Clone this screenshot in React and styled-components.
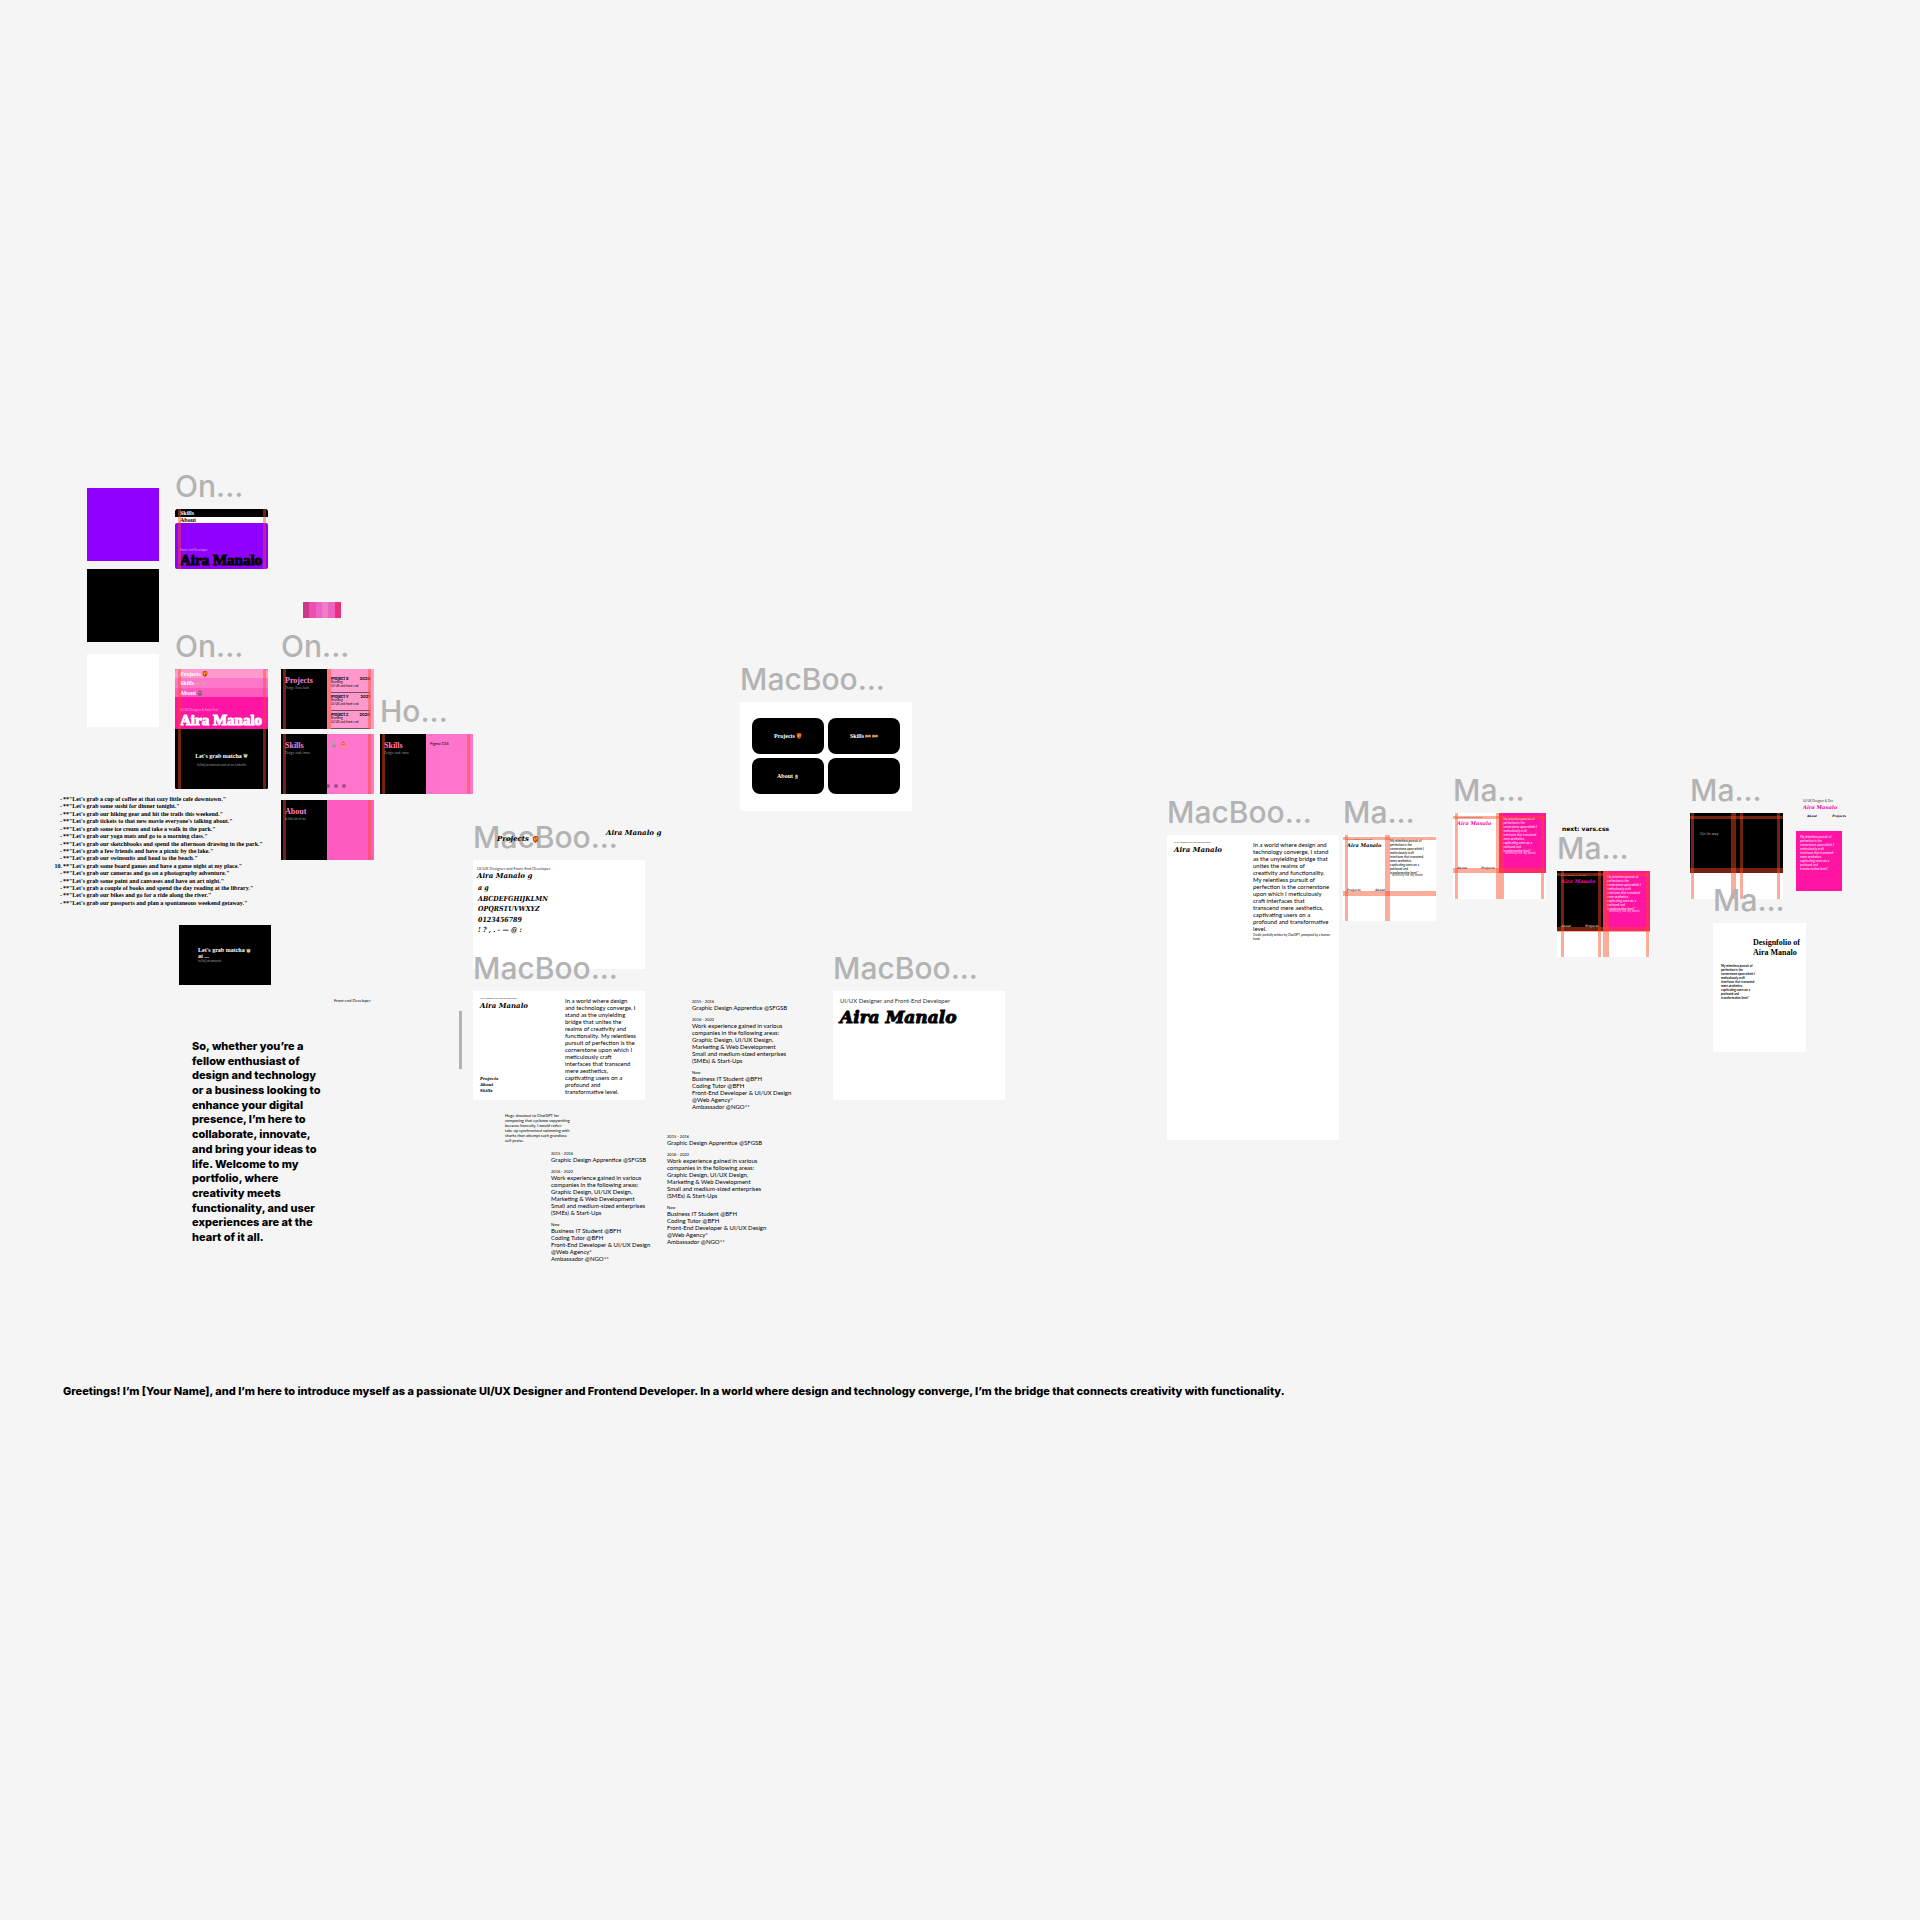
import React from "react";
import styled, { createGlobalStyle, css } from "styled-components";

const GlobalStyle = createGlobalStyle`
  *, *::before, *::after { box-sizing: border-box; }
  body { margin: 0; background: #f5f5f5; }
  h2, p, ul, ol, figure { margin: 0; padding: 0; }
  ul, ol { list-style: none; }
  a { color: inherit; text-decoration: none; }
`;

const SERIF = '"Liberation Serif", serif';
const SLAB = '"DejaVu Serif", serif';
const SLAB_NARROW = '"DejaVu Serif Condensed", "DejaVu Serif", serif';
const SANS = 'Inter, sans-serif';
const BODY = 'Lato, sans-serif';

/* ---------- canvas ---------- */

const Canvas = styled.main`
  position: relative;
  min-height: 100vh;
  overflow: hidden;
  background: #f5f5f5;
  color: #000;
  font-family: ${SANS};
`;

const Node = styled.div`
  position: absolute;
  left: ${(p) => p.$x}px;
  top: ${(p) => p.$y}px;
  ${(p) => p.$w && css`width: ${p.$w}px;`}
`;

const FrameRoot = styled.figure`
  position: absolute;
  left: ${(p) => p.$x}px;
  top: ${(p) => p.$y}px;
`;

const FrameLabel = styled.figcaption`
  height: 41px;
  font: 500 30px/36px ${SANS};
  color: #b3b3b3;
  white-space: nowrap;
`;

function Frame({ x, y, label, children }) {
  return (
    <FrameRoot $x={x} $y={label ? y - 41 : y}>
      {label && <FrameLabel>{label}</FrameLabel>}
      {children}
    </FrameRoot>
  );
}

const Board = styled.div`
  position: relative;
  display: flex;
  flex-direction: column;
  width: ${(p) => p.$w}px;
  height: ${(p) => p.$h}px;
  background: ${(p) => p.$bg || "#fff"};
  border-radius: ${(p) => p.$r || 0}px;
  overflow: hidden;
`;

const Guide = styled.i`
  position: absolute;
  background: rgba(250, 74, 34, 0.46);
  ${(p) =>
    p.$row
      ? css`left: 0; right: 0; top: ${p.$at}px; height: ${p.$size || 3}px;`
      : css`top: 0; bottom: 0; left: ${p.$at}px; width: ${p.$size || 3}px;`}
`;

const Swatch = styled.div`
  height: 73px;
  background: ${(p) => p.$color};
`;

const Strip = styled.div`
  display: flex;
  height: 16px;
`;

const StripCell = styled.span`
  flex: 1;
  background: ${(p) => p.$color};
`;

const ScrollMark = styled.div`
  height: 58px;
  background: #b3b3b3;
`;

/* ---------- type ---------- */

const Title = styled.h2`
  font: 700 ${(p) => p.$size}px/${(p) => p.$lh || p.$size + 2}px ${SERIF};
  color: ${(p) => p.$color || "#000"};
  white-space: nowrap;
  display: flex;
  align-items: center;
  gap: 1px;
  ${(p) => p.$fat && css`-webkit-text-stroke: 1px currentColor;`}
`;

const Name = styled.h2`
  font: italic 700 ${(p) => p.$size}px/${(p) => p.$size + 3}px ${(p) => (p.$narrow ? SLAB_NARROW : SLAB)};
  color: ${(p) => p.$color || "#000"};
  white-space: nowrap;
  display: flex;
  align-items: center;
  gap: 3px;
  ${(p) => p.$fat && css`-webkit-text-stroke: 1px currentColor;`}
`;

const Small = styled.p`
  font: 400 ${(p) => p.$size || 3}px/${(p) => (p.$size || 3) + 1}px ${BODY};
  color: ${(p) => p.$color || "#333"};
  white-space: nowrap;
`;

const CopyRoot = styled.p`
  display: flex;
  flex-direction: column;
  justify-content: space-between;
  height: ${(p) => p.$h}px;
  font: ${(p) => p.$weight || 400} ${(p) => p.$size}px/${(p) => p.$size + 1}px ${(p) => p.$font || BODY};
  color: ${(p) => p.$color || "#000"};
  white-space: nowrap;
`;

function Copy({ lines, h, size, weight, color, font }) {
  return (
    <CopyRoot $h={h} $size={size} $weight={weight} $color={color} $font={font}>
      {lines.map((line) => (
        <span key={line}>{line}</span>
      ))}
    </CopyRoot>
  );
}

/* ---------- drawings ---------- */

const Glyph = styled.svg`
  flex: none;
  width: ${(p) => p.$s || 6}px;
  height: ${(p) => p.$s || 6}px;
`;

const Mitt = ({ s }) => (
  <Glyph $s={s} viewBox="0 0 12 12" aria-hidden="true">
    <path d="M1 2 4 0h5l2 3-1 6-4 3-4-3z" fill="#d8431b" />
    <path d="M3 3h3v5H4zM7 2h2v4H7z" fill="#f5a623" />
  </Glyph>
);
const Cup = ({ s }) => (
  <Glyph $s={s} viewBox="0 0 12 12" aria-hidden="true">
    <path d="M1 3h10l-1 6-3 3H5L2 9z" fill="#d9cdb8" />
    <ellipse cx="6" cy="4" rx="4" ry="2" fill="#7fae5a" />
    <path d="M3 10h6l-1 2H4z" fill="#8d5a3a" />
  </Glyph>
);
const Hands = ({ s, color = "#d99a5b" }) => (
  <Glyph $s={s} viewBox="0 0 12 12" aria-hidden="true">
    <path d="M0 5 3 3l3 2 3-2 3 2-1 4-3-1-2 1-2-1-3 2z" fill={color} />
  </Glyph>
);
const Person = ({ s, hair = "#444", body = "#777" }) => (
  <Glyph $s={s} viewBox="0 0 12 12" aria-hidden="true">
    <path d="M3 5a3 4 0 0 1 6 0v4H3z" fill={hair} />
    <circle cx="6" cy="5" r="2" fill="#d9b08c" />
    <path d="M2 12c0-5 8-5 8 0z" fill={body} />
  </Glyph>
);

/* ---------- landing screens ---------- */

const Band = styled.div`
  display: flex;
  align-items: center;
  height: ${(p) => p.$h}px;
  padding-left: 5px;
  background: ${(p) => p.$bg};
  border-radius: ${(p) => p.$r || 0}px ${(p) => p.$r || 0}px 0 0;
`;

const Hero = styled.div`
  display: flex;
  flex-direction: column;
  justify-content: flex-end;
  height: ${(p) => p.$h}px;
  padding-left: 5px;
  background: ${(p) => p.$bg};
  border-radius: ${(p) => p.$r || 0}px ${(p) => p.$r || 0}px 0 0;
`;

const Invite = styled.div`
  display: flex;
  flex-direction: column;
  align-items: ${(p) => (p.$left ? "flex-start" : "center")};
  justify-content: center;
  gap: ${(p) => (p.$left ? 0 : 3)}px;
  height: 60px;
  padding-left: ${(p) => (p.$left ? 19 : 0)}px;
  background: #000;
`;

const Split = styled.div`
  display: grid;
  grid-template-columns: 46px 1fr;
  height: 60px;
`;

const Pane = styled.section`
  position: relative;
  display: flex;
  flex-direction: column;
  gap: ${(p) => p.$gap || 0}px;
  padding: ${(p) => p.$pad || "0"};
  background: ${(p) => p.$bg};
`;

const ProjectRow = styled.li`
  display: grid;
  grid-template-columns: 1fr auto;
  height: 17px;
  margin-bottom: 1px;
  border-bottom: 1px solid #7d4a64;
  padding-bottom: 4px;
  font: 700 4px/5px ${SANS};
`;

const RowNote = styled.span`
  grid-column: 1 / -1;
  font: 400 3px/3px ${BODY};
`;

const Dots = styled.div`
  position: absolute;
  left: -1px;
  bottom: 6px;
  display: flex;
  gap: 4px;
`;

const Dot = styled.span`
  width: 4px;
  height: 4px;
  border-radius: 50%;
  background: rgba(80, 40, 70, 0.5);
`;

const IconRow = styled.div`
  display: flex;
  gap: 3px;
`;

function SectionScreen({ x, y, label, title, note, bg, children, mid }) {
  return (
    <Frame x={x} y={y} label={label}>
      <Board $w={93} $h={60}>
        <Split>
          <Pane $bg="#000" $pad="8px 0 0 4px" $gap={1}>
            <Title $size={8} $lh={8} $color="#ff7fcf">{title}</Title>
            <Small $color="#999">{note}</Small>
          </Pane>
          <Pane $bg={bg} $pad="7px 4px 0">
            {children}
          </Pane>
        </Split>
        <Guide $at={2} />
        {mid && <Guide $at={46} $size={4} />}
        <Guide $at={87} />
      </Board>
    </Frame>
  );
}

const DotRow = () => (
  <Dots>
    <Dot />
    <Dot />
    <Dot />
  </Dots>
);

/* ---------- card board ---------- */

const CardGrid = styled.div`
  display: grid;
  grid-template-columns: 1fr 1fr;
  grid-auto-rows: 36px;
  gap: 4px;
  padding: 16px 12px;
`;

const Card = styled.div`
  display: flex;
  align-items: center;
  justify-content: center;
  border-radius: 8px;
  background: #000;
`;

/* ---------- portfolio boards ---------- */

const Columns = styled.div`
  flex: 1;
  display: grid;
  grid-template-columns: ${(p) => p.$left}px 1fr;
  padding: 6px 7px;
`;

const Side = styled.div`
  display: flex;
  flex-direction: column;
  justify-content: space-between;
`;

const Nav = styled.nav`
  display: flex;
  flex-direction: ${(p) => (p.$row ? "row" : "column")};
  justify-content: space-between;
  font: italic 700 ${(p) => (p.$row ? 3 : 4)}px/${(p) => (p.$row ? 4 : 6)}px ${SLAB};
  color: ${(p) => p.$color || "#000"};
`;

const PushDown = styled.div`
  margin-top: auto;
`;

const MiniHead = styled.div`
  display: flex;
  flex-direction: column;
  gap: ${(p) => p.$gap || 0}px;
`;

const Specimen = styled.div`
  display: flex;
  flex-direction: column;
  padding: 6px 0 0 4px;
`;

const SpecimenRows = styled.div`
  display: flex;
  flex-direction: column;
  justify-content: space-between;
  height: 54px;
  padding: 2px 0 0 1px;
`;

const ROLE = "UI/UX Designer and Front-End Developer";

const PITCH_NARROW = [
  "In a world where design", "and technology converge, I", "stand as the unyielding",
  "bridge that unites the", "realms of creativity and", "functionality. My relentless",
  "pursuit of perfection is the", "cornerstone upon which I", "meticulously craft",
  "interfaces that transcend", "mere aesthetics,", "captivating users on a",
  "profound and", "transformative level.",
];

const PITCH_WIDE = [
  "In a world where design and", "technology converge, I stand", "as the unyielding bridge that",
  "unites the realms of", "creativity and functionality.", "My relentless pursuit of",
  "perfection is the cornerstone", "upon which I meticulously", "craft interfaces that",
  "transcend mere aesthetics,", "captivating users on a", "profound and transformative", "level.",
];

const PITCH_MINI = [
  "My relentless pursuit of", "perfection is the", "cornerstone upon which I",
  "meticulously craft", "interfaces that transcend", "mere aesthetics,",
  "captivating users on a", "profound and", "transformative level.*",
];

const CLOSING = [
  "So, whether you’re a", "fellow enthusiast of", "design and technology",
  "or a business looking to", "enhance your digital", "presence, I’m here to",
  "collaborate, innovate,", "and bring your ideas to", "life. Welcome to my",
  "portfolio, where", "creativity meets", "functionality, and user",
  "experiences are at the", "heart of it all.",
];

const THANKS = [
  "Huge shoutout to ChatGPT for", "composing that eyebrow copywriting",
  "because honestly, I would rather", "take up synchronized swimming with",
  "sharks than attempt such grandiose", "self-praise.",
];

const IDEAS = [
  "a cup of coffee at that cozy little cafe downtown.",
  "some sushi for dinner tonight.",
  "our hiking gear and hit the trails this weekend.",
  "tickets to that new movie everyone's talking about.",
  "some ice cream and take a walk in the park.",
  "our yoga mats and go to a morning class.",
  "our sketchbooks and spend the afternoon drawing in the park.",
  "a few friends and have a picnic by the lake.",
  "our swimsuits and head to the beach.",
  "some board games and have a game night at my place.",
  "our cameras and go on a photography adventure.",
  "some paint and canvases and have an art night.",
  "a couple of books and spend the day reading at the library.",
  "our bikes and go for a ride along the river.",
  "our passports and plan a spontaneous weekend getaway.",
];

const IdeaList = styled.ol`
  display: flex;
  flex-direction: column;
  justify-content: space-between;
  height: 111px;
  font: 700 6px/7px ${SERIF};
  white-space: nowrap;
`;

const Idea = styled.li`
  display: grid;
  grid-template-columns: 6px auto;
  column-gap: 1px;
`;

const IdeaMark = styled.span`
  display: flex;
  justify-content: flex-end;
`;

function IntroBoard({ x, y, h, left, lines, copyH, nav, foot }) {
  return (
    <Frame x={x} y={y} label="MacBoo...">
      <Board $w={172} $h={h}>
        <Columns $left={left}>
          <Side>
            <MiniHead $gap={1}>
              <Small $size={2}>{ROLE}</Small>
              <Name $size={7}>Aira Manalo</Name>
            </MiniHead>
            {nav && (
              <Nav aria-label="Sections">
                <a href="#projects">Projects</a>
                <a href="#about">About</a>
                <a href="#skills">Skills</a>
              </Nav>
            )}
          </Side>
          <MiniHead $gap={2}>
            <Copy lines={lines} h={copyH} size={6} />
            {foot && <Copy lines={foot} h={8} size={3} />}
          </MiniHead>
        </Columns>
      </Board>
    </Frame>
  );
}

function MiniBoard({ x, y, leftBg, rightBg, nameColor, ink, copyColor, guides, projects, inset = 4 }) {
  return (
    <Frame x={x} y={y} label="Ma...">
      <Board $w={93} $h={86}>
        <Split>
          <Pane $bg={leftBg} $pad="3px 4px 3px 4px">
            <MiniHead>
              <Small $size={2} $color={ink}>UI/UX Designer & Front-End</Small>
              <Name $size={5} $color={nameColor}>Aira Manalo</Name>
            </MiniHead>
            <PushDown>
              <Nav $row $color={ink} aria-label="Sections">
                <a href="#first">{projects ? "Projects" : "About"}</a>
                <a href="#second">{projects ? "About" : "Projects"}</a>
              </Nav>
            </PushDown>
          </Pane>
          <Pane $bg={rightBg} $pad={`4px 0 0 ${inset}px`} $gap={1}>
            <Copy lines={PITCH_MINI} h={33} size={3} weight={700} color={copyColor} />
            <Small $color={copyColor}>* definitely not my words</Small>
          </Pane>
        </Split>
        {guides.map(([at, size, row]) => (
          <Guide key={`${at}-${row ? "r" : "c"}`} $at={at} $size={size} $row={row} />
        ))}
      </Board>
    </Frame>
  );
}

/* ---------- work history ---------- */

const History = styled.div`
  display: flex;
  flex-direction: column;
  gap: 6px;
`;

const JOBS = [
  { years: "2015 - 2016", h: 7, lines: ["Graphic Design Apprentice @SFGSB"] },
  {
    years: "2016 - 2022",
    h: 42,
    lines: [
      "Work experience gained in various", "companies in the following areas:",
      "Graphic Design, UI/UX Design,", "Marketing & Web Development",
      "Small and medium-sized enterprises", "(SMEs) & Start-Ups",
    ],
  },
  {
    years: "Now",
    h: 35,
    lines: [
      "Business IT Student @BFH", "Coding Tutor @BFH",
      "Front-End Developer & UI/UX Design", "@Web Agency*", "Ambassador @NGO**",
    ],
  },
];

function WorkHistory({ x, y }) {
  return (
    <Node $x={x} $y={y}>
      <History>
        {JOBS.map((job) => (
          <div key={job.years}>
            <Small $size={4} $color="#000">{job.years}</Small>
            <Copy lines={job.lines} h={job.h} size={6} />
          </div>
        ))}
      </History>
    </Node>
  );
}

const Greeting = styled.p`
  font: 800 11px/14px ${SANS};
  white-space: nowrap;
`;

const FileNote = styled.p`
  font: 700 6px/8px "DejaVu Sans", sans-serif;
  white-space: nowrap;
`;

const ComingSoon = styled.div`
  height: 60px;
  padding: 18px 0 0 10px;
  background: #000;
`;

const Cover = styled.div`
  display: flex;
  flex-direction: column;
  gap: 6px;
  padding: 15px 3px 0 8px;
`;

const CoverTitle = styled.div`
  padding-left: 32px;
`;

const PinkCard = styled.div`
  height: 60px;
  padding: 4px;
  background: #ff14a4;
`;

export default function App() {
  return (
    <>
      <GlobalStyle />
      <Canvas>
        <Node $x={87} $y={488} $w={72}><Swatch $color="#9000ff" /></Node>
        <Node $x={87} $y={569} $w={72}><Swatch $color="#000" /></Node>
        <Node $x={87} $y={654} $w={72}><Swatch $color="#fff" /></Node>

        <Frame x={175} y={509} label="On...">
          <Board $w={93} $h={60} $r={2} $bg="#f5f5f5">
            <Band $h={8} $bg="#000" $r={2}><Title $size={6} $color="#fff">Skills</Title></Band>
            <Band $h={6} $bg="#fff" $r={2}><Title $size={6}>About</Title></Band>
            <Hero $h={46} $bg="#9000ff" $r={2}>
              <Small $color="#d9a8ff">Front-end Developer</Small>
              <Title $size={15} $fat>Aira Manalo</Title>
            </Hero>
            <Guide $at={3} />
            <Guide $at={88} />
          </Board>
        </Frame>

        <Node $x={303} $y={602} $w={38}>
          <Strip>
            {["#c8388f", "#ea50a8", "#ec63cc", "#ee7ec9", "#ee63bd", "#ea2f7c"].map((c) => (
              <StripCell key={c} $color={c} />
            ))}
          </Strip>
        </Node>

        <Frame x={175} y={669} label="On...">
          <Board $w={93} $h={120} $bg="#000" $r={2}>
            <Band $h={9} $bg="#ff9acd"><Title $size={6} $color="#fff">Projects<Mitt /></Title></Band>
            <Band $h={10} $bg="#ff77ca">
              <Title $size={6} $color="#fff">Skills<Hands s={5} color="#d9a58c" /><Hands s={5} color="#d9a58c" /></Title>
            </Band>
            <Band $h={9} $bg="#ff5cbe"><Title $size={6} $color="#fff">About<Person /></Title></Band>
            <Hero $h={32} $bg="#ff14a4">
              <Small $color="#ffb0dd">UI/UX Designer & Front-End</Small>
              <Title $size={15} $color="#fff" $fat>Aira Manalo</Title>
            </Hero>
            <Invite>
              <Title $size={6} $color="#fff">Let's grab matcha<Cup s={5} /></Title>
              <Small $color="#999">hello@airamanalo.com or on LinkedIn</Small>
            </Invite>
            <Guide $at={3} />
            <Guide $at={88} />
          </Board>
        </Frame>

        <SectionScreen x={281} y={669} label="On..." title="Projects" note="Things I have built" bg="#ff99cc" mid>
          <ul>
            {[["Project X", "2023"], ["Project Y", "2021"], ["Project Z", "2020"]].map(([name, year]) => (
              <ProjectRow key={name}>
                <span>{name}</span>
                <span>{year}</span>
                <RowNote>Branding</RowNote>
                <RowNote>UI/UX and front-end</RowNote>
              </ProjectRow>
            ))}
          </ul>
        </SectionScreen>
        <SectionScreen x={281} y={734} title="Skills" note="Design, code, more" bg="#ff75cc">
          <IconRow>
            <Person s={6} hair="#8aa08a" body="#8f8f8f" />
            <Person s={6} hair="#e0491c" body="#f0b030" />
          </IconRow>
          <DotRow />
        </SectionScreen>
        <SectionScreen x={281} y={800} title="About" note="A little bit of me" bg="#ff5cc3" />
        <SectionScreen x={380} y={734} label="Ho..." title="Skills" note="Design, code, more" bg="#ff75cc">
          <Small $size={4} $color="#000">Figma CSS</Small>
        </SectionScreen>

        <Node $x={56} $y={796}>
          <IdeaList>
            {IDEAS.map((idea, i) => (
              <Idea key={idea}>
                <IdeaMark>{i === 9 ? "10." : "-"}</IdeaMark>
                <span>**"Let's grab {idea}"</span>
              </Idea>
            ))}
          </IdeaList>
        </Node>

        <Node $x={179} $y={925} $w={92}>
          <Invite $left>
            <Title $size={6} $lh={6} $color="#fff">Let's grab matcha<Cup s={5} /></Title>
            <Title $size={6} $lh={6} $color="#fff">at ...</Title>
            <Small $color="#999">hello@airamanalo</Small>
          </Invite>
        </Node>

        <Node $x={334} $y={998}><Small $size={4} $color="#000">Front-end Developer</Small></Node>
        <Node $x={459} $y={1011} $w={3}><ScrollMark /></Node>
        <Node $x={192} $y={1040}><Copy lines={CLOSING} h={203} size={11} weight={800} font={SANS} /></Node>

        <Frame x={473} y={860} label="MacBoo...">
          <Board $w={172} $h={109}>
            <Specimen>
              <Small $size={4}>{ROLE}</Small>
              <Name $size={7}>Aira Manalo g</Name>
              <SpecimenRows>
                {["a g", "ABCDEFGHIJKLMN", "OPQRSTUVWXYZ", "0123456789", "! ? , . - — @ :"].map((row) => (
                  <Name key={row} $size={7} $narrow>{row}</Name>
                ))}
              </SpecimenRows>
            </Specimen>
          </Board>
        </Frame>
        <Node $x={497} $y={834}><Name $size={7}>Projects<Mitt s={7} /></Name></Node>
        <Node $x={606} $y={828}><Name $size={7}>Aira Manalo g</Name></Node>

        <Frame x={740} y={702} label="MacBoo...">
          <Board $w={172} $h={109}>
            <CardGrid>
              <Card><Title $size={6} $color="#fff">Projects<Mitt /></Title></Card>
              <Card><Title $size={6} $color="#fff">Skills<Hands /><Hands /></Title></Card>
              <Card><Title $size={6} $color="#fff">About<Person s={5} hair="#d9c08c" body="#5b7fb0" /></Title></Card>
              <Card />
            </CardGrid>
          </Board>
        </Frame>

        <IntroBoard x={473} y={991} h={109} left={85} lines={PITCH_NARROW} copyH={97} nav />

        <Node $x={505} $y={1113}><Copy lines={THANKS} h={29} size={4} /></Node>

        <WorkHistory x={692} y={999} />
        <WorkHistory x={551} y={1151} />
        <WorkHistory x={667} y={1134} />

        <Frame x={833} y={991} label="MacBoo...">
          <Board $w={172} $h={109}>
            <Columns $left={158}>
              <MiniHead $gap={3}>
                <Small $size={6}>{ROLE}</Small>
                <Name $size={17} $fat>Aira Manalo</Name>
              </MiniHead>
            </Columns>
          </Board>
        </Frame>

        <IntroBoard
          x={1167}
          y={835}
          h={305}
          left={79}
          lines={PITCH_WIDE}
          copyH={90}
          foot={["Credit: partially written by ChatGPT, prompted by a human", "hand."]}
        />

        <MiniBoard
          x={1343} y={835} leftBg="#fff" rightBg="#fff" ink="#333" copyColor="#333" projects inset={1}
          guides={[[2, 3], [42, 5], [2, 3, true], [56, 5, true]]}
        />
        <MiniBoard
          x={1453} y={813} leftBg="#fff" rightBg="#ff14a4" nameColor="#ff00a8" ink="#333" copyColor="#ffd0ec"
          guides={[[2, 3], [43, 8], [88, 3], [3, 3, true], [55, 5, true]]}
        />
        <Node $x={1562} $y={825}><FileNote>next: vars.css</FileNote></Node>
        <MiniBoard
          x={1557} y={871} leftBg="#000" rightBg="#ff14a4" nameColor="#ff00a8" ink="#ccc" copyColor="#ffd0ec"
          guides={[[4, 3], [41, 3], [46, 6], [89, 3], [2, 3, true], [56, 5, true]]}
        />

        <Frame x={1690} y={813} label="Ma...">
          <Board $w={93} $h={86}>
            <ComingSoon><Small $size={4} $color="#aaa">On its way</Small></ComingSoon>
            <Guide $at={1} />
            <Guide $at={41} $size={5} />
            <Guide $at={50} />
            <Guide $at={87} />
            <Guide $row $at={3} />
            <Guide $row $at={55} $size={5} />
          </Board>
        </Frame>

        <Node $x={1803} $y={799}>
          <Small>UI/UX Designer & Dev</Small>
          <Name $size={5} $color="#ff00a8">Aira Manalo</Name>
        </Node>
        <Node $x={1807} $y={814} $w={39}>
          <Nav $row aria-label="Sections">
            <a href="#about">About</a>
            <a href="#projects">Projects</a>
          </Nav>
        </Node>
        <Node $x={1796} $y={831} $w={46}>
          <PinkCard>
            <Copy lines={PITCH_MINI} h={33} size={3} weight={700} color="#ffd0ec" />
          </PinkCard>
        </Node>

        <Frame x={1713} y={923} label="Ma...">
          <Board $w={93} $h={129}>
            <Cover>
              <CoverTitle>
                <Title $size={8}>Designfolio of</Title>
                <Title $size={8}>Aira Manalo</Title>
              </CoverTitle>
              <Copy lines={PITCH_MINI} h={33} size={3} weight={700} />
            </Cover>
          </Board>
        </Frame>

        <Node $x={63} $y={1384}>
          <Greeting>
            Greetings! I’m [Your Name], and I’m here to introduce myself as a passionate UI/UX Designer and Frontend
            Developer. In a world where design and technology converge, I’m the bridge that connects creativity with
            functionality.
          </Greeting>
        </Node>
      </Canvas>
    </>
  );
}
